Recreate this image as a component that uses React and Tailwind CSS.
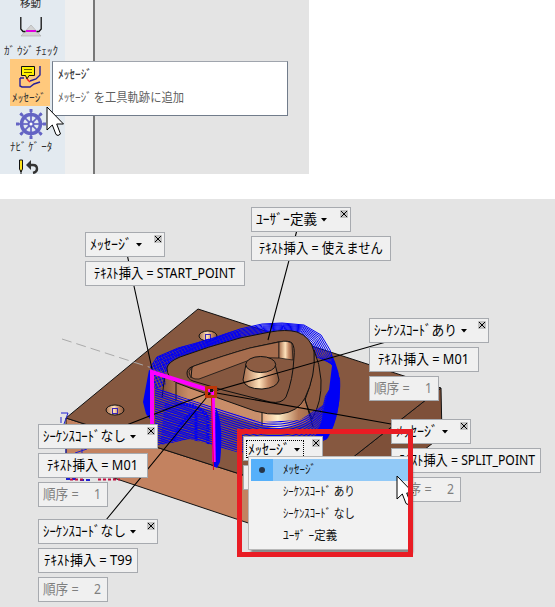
import { useLayoutEffect, useRef, useState } from "react";

// Single line of text squeezed or stretched horizontally to a given width.
function Fit({ w, children, className = "" }) {
  const ref = useRef(null);
  const [scale, setScale] = useState(1);
  useLayoutEffect(() => {
    if (ref.current) setScale(w / ref.current.offsetWidth);
  }, [w]);
  return (
    <span className={`block shrink-0 whitespace-nowrap ${className}`} style={{ width: w }}>
      <span ref={ref} className="inline-block origin-left" style={{ transform: `scaleX(${scale})` }}>
        {children}
      </span>
    </span>
  );
}

const Close = () => (
  <svg className="mt-[2px] mr-[2px] ml-auto shrink-0 self-start" width="8" height="8" viewBox="0 0 8 8" shapeRendering="crispEdges">
    <rect width="8" height="8" fill="#c3c3c3" />
    <path d="M1 1L7 7M7 1L1 7" stroke="#000" strokeWidth="1.1" />
  </svg>
);

function Tag({ place, title, tw, width, text, textW, textPad, boxW, order, focus }) {
  const box = "flex h-[25px] items-center border border-[#a7aaaf] bg-[#f0f0f0] pb-[2px]";
  return (
    <div className={`absolute flex flex-col gap-1 text-[14px] leading-[21px] text-black ${place}`}>
      <div className={`${box} pl-1`} style={{ width }}>
        <span className={focus ? "-ml-[2px] mt-[2px] flex h-[18px] items-center border border-dotted border-black pr-[3px] pl-px" : "flex items-center"}>
          <Fit w={tw}>{title}</Fit>
          <svg className="mt-[2px] ml-[4px]" width="6" height="4" viewBox="0 0 6 4">
            <path d="M0 0H6L3 3.5Z" fill="#000" />
          </svg>
        </span>
        <Close />
      </div>
      {text && (
        <div className={box} style={{ width: boxW, paddingLeft: textPad }}>
          <Fit w={textW}>{text}</Fit>
        </div>
      )}
      {order && (
        <div className={`${box} w-[70px] justify-between pr-[6px] pl-1 text-[#7f7f7f]`}>
          <Fit w={36}>順序 =</Fit>
          <Fit w={7}>{order}</Fit>
        </div>
      )}
    </div>
  );
}

const Cursor = ({ className }) => (
  <svg className={`absolute ${className}`} width="19" height="31" viewBox="0 0 19 31">
    <path d="M1 1V24L6.3 19L10 28.5L12 29.5L14.5 28L10.7 18H17.5Z" fill="#fff" stroke="#000" strokeWidth="1" />
  </svg>
);

const spokes = [0, 45, 90, 135, 180, 225, 270, 315];

function TopPanel() {
  return (
    <div className="relative flex h-[174px] w-[309px] overflow-hidden bg-[#e4e4e4]">
      <div className="flex w-[65px] flex-col bg-[#e3eaf0] text-[11px] leading-[14px] text-[#303030] [&>*]:shrink-0">
        <div className="-mt-[4px] h-[14px] pl-5"><Fit w={21}>移動</Fit></div>
        <svg className="mt-[6px] ml-5" width="22" height="22" viewBox="20 16 22 22">
          <path d="M21 36L31 25L41 36Z" fill="#d3d3d3" stroke="#aaa" strokeWidth=".6" />
          <path d="M20.8 17V29L23 31.5H25.500M41.2 17V29L39 31.5H36.5" fill="none" stroke="#111" strokeWidth="1.3" />
          <path d="M26 31H36" stroke="#e000e0" strokeWidth="2" />
        </svg>
        <div className="mt-[6px] h-[14px] pl-1"><Fit w={54}>ｶﾞ&#8198;ｳｼﾞ&#8198;ﾁｪｯｸ</Fit></div>
        <div className="mt-px ml-[10px] flex h-[47px] w-10 flex-col bg-[#ffc97d]">
          <svg className="mt-[4px] ml-[9px] shrink-0" width="24" height="28" viewBox="19 63 24 28">
            <path d="M40 66V75L36 79L30 81M20 78V86L22 87H30L34 84L40 82M20 78H24" fill="none" stroke="#26209c" strokeWidth="1.4" />
            <path d="M21.5 66.5H34.5V75.5H29L27 79L25.5 75.5H21.5Z" fill="#fff200" stroke="#111" />
            <path d="M24 69.5H32M24 72.5H32" stroke="#665f00" />
            <path d="M27 79L30 82" stroke="#e22" strokeWidth="1.5" />
          </svg>
          <div className="pl-[2px]"><Fit w={34}>ﾒｯｾｰｼﾞ</Fit></div>
        </div>
        <svg className="mt-[2px] ml-[15px]" width="32" height="32" viewBox="-16 -16 32 32">
          <g fill="none" stroke="#6464c4">
            <circle r="9.5" strokeWidth="3.5" />
            <circle r="2.5" strokeWidth="2" fill="#fff" />
            {spokes.map((a) => (
              <g key={a} transform={`rotate(${a})`}>
                <path d="M0-3V-15" strokeWidth="1.7" />
                <path d="M0-12V-15" strokeWidth="3" />
              </g>
            ))}
          </g>
        </svg>
        <div className="h-[14px] pl-[10px]"><Fit w={42}>ﾅﾋﾞ&#8198;ｹﾞ&#8198;ｰﾀ</Fit></div>
        <svg className="mt-[4px] ml-[18px] shrink-0" width="22" height="20" viewBox="18 158 22 20">
          <path d="M19.5 160V169L21 172L22.5 169V160Z" fill="#ffe51a" stroke="#111" />
          <path d="M21 170V178" stroke="#111" />
          <path d="M28 165H33Q37 165 37 169Q37 172 33 173" fill="none" stroke="#333" strokeWidth="2.4" />
          <path d="M26 165L31 160V170Z" fill="#333" />
        </svg>
      </div>
      <div className="w-7 bg-[#efefef]" />
      <div className="w-[2px] bg-[#777]" />
      <div className="absolute top-[61px] left-[52px] flex h-[55px] w-[236px] flex-col border border-[#717c8b] border-t-[#a0a5ad] bg-white pl-[5px] text-[12px] leading-4">
        <div className="mt-[5px] font-medium text-[#404040]"><Fit w={34}>ﾒｯｾｰｼﾞ</Fit></div>
        <div className="mt-[7px] text-[#606060]"><Fit w={126}>ﾒｯｾｰｼﾞ&#8198;を工具軌跡に追加</Fit></div>
      </div>
      <Cursor className="top-[106px] left-[46px]" />
    </div>
  );
}

const BOSS = "M167 368Q168 362 180 357Q207 347 240 338L270 332Q286 329 297 332Q311 337 314 352Q316 375 305 398Q298 412 280 414Q268 415 255 411L190 388L177 383Q167 378 167 368Z";
const POCKET = "M187 373Q187 368 194 366Q225 355 250 348L278 342Q289 340 292 343Q295 347 294 357Q293 380 286 397Q282 404 270 402L223 390L193 381Q187 379 187 373Z";

// Outermost and innermost tool passes; the ones between are interpolated.
const OUTER = [[150, 368], [157, 357], [178, 348], [208, 340], [240, 329], [262, 324], [282, 323], [304, 325], [321, 335], [330, 350], [338, 374]];
const INNER = [[165, 372], [168, 365], [184, 357], [212, 348], [242, 339], [264, 333], [284, 330], [300, 333], [312, 344], [317, 357], [333, 364]];
const STEPS = 9;
const rings = Array.from({ length: STEPS }, (_, i) => {
  const t = i / (STEPS - 1);
  return OUTER.map(([x, y], j) => `${(x + (INNER[j][0] - x) * t).toFixed(1)},${(y + (INNER[j][1] - y) * t).toFixed(1)}`).join(" ");
});
const passes = Array.from({ length: 27 }, (_, i) => i);

function Model() {
  return (
    <svg className="absolute inset-0" width="555" height="408" viewBox="0 199 555 408">
      <defs>
        <linearGradient id="wall" gradientUnits="userSpaceOnUse" x1="165" y1="0" x2="322" y2="0">
          <stop offset="0" stopColor="#8b5a3e" />
          <stop offset=".15" stopColor="#c88c66" />
          <stop offset=".6" stopColor="#c98f6c" />
          <stop offset=".64" stopColor="#ecba92" />
          <stop offset=".72" stopColor="#fff0c8" />
          <stop offset=".85" stopColor="#b67a57" />
          <stop offset="1" stopColor="#8b5a3e" />
        </linearGradient>
        <linearGradient id="cyl">
          <stop offset="0" stopColor="#a96f4d" />
          <stop offset=".45" stopColor="#ffe2bb" />
          <stop offset=".7" stopColor="#c48a66" />
          <stop offset="1" stopColor="#85553a" />
        </linearGradient>
        <pattern id="mesh" width="3" height="3" patternUnits="userSpaceOnUse" patternTransform="rotate(14)">
          <rect width="3" height="2" fill="#0000f5" />
        </pattern>
        <pattern id="dots" width="3" height="3" patternUnits="userSpaceOnUse" patternTransform="rotate(-24)">
          <rect width="2" height="2.2" fill="#0000f5" />
        </pattern>
        <clipPath id="lower">
          <path d="M155 386L182 397L223 410L262 422L300 420L323 405L332 365L340 378Q342 410 328 438L300 456L240 453L222 448L190 439L155 446Z" />
        </clipPath>
      </defs>

      {/* base plate */}
      <path d="M66 418L305 495V542L66 462Z" fill="#c38260" stroke="#111" />
      <path d="M305 495L441 388L442 436L305 542Z" fill="#7e5039" stroke="#111" />
      <path d="M66 418L198 309L441 388L305 495Z" fill="#865840" stroke="#111" />
      {[[208, 336], [115, 410]].map(([x, y]) => (
        <g key={x}>
          <ellipse cx={x} cy={y} rx="9" ry="5" fill="url(#cyl)" stroke="#111" />
          <rect x={x - 2.5} y={y - 1.5} width="5" height="5" fill="none" stroke="#3a24b8" />
        </g>
      ))}
      <path d="M62 339L152 368" stroke="#aaa" strokeDasharray="10 5" />

      {/* tool path around the back of the boss */}
      <path d="M150 368L157 357L178 348L240 329L242 339L184 357L168 365L166 386L158 388L152 388Z" fill="url(#dots)" />
      <g fill="none" stroke="#0000f5" strokeWidth="1" strokeLinejoin="round">
        {rings.map((points) => <polyline key={points} points={points} />)}
      </g>
      <path d="M331 353Q341 372 340 390Q339 422 326 440L316 436L322 420Q325 400 329 390L332 366Z" fill="#0000f5" />
      <path d="M149 370L143 402L146 414L154 424V372Z" fill="#0000f5" />

      {/* boss */}
      <path d="M167 370L164 396L262 426Q290 432 311 420Q324 400 320 372L314 350Z" fill="url(#wall)" />
      <path d="M314 350Q320 364 321 380Q322 402 312 419L305 400Q315 375 314 350Z" fill="#8c5b40" stroke="#111" />
      <path d="M165 374L162 398M176 383V401M262 412V426M305 399L313 427" stroke="#111" fill="none" />
      <path d={BOSS} fill="#865840" stroke="#111" />
      <path d={POCKET} fill="#865840" stroke="#111" />
      <path d="M189 372Q190 368 194 366Q225 355 250 348L279 342V358Q260 357 247 361L199 379Q190 380 189 372Z" fill="#a66d4e" stroke="#111" strokeWidth=".8" />
      <path d="M279 342Q289 340 292 344L293 360L279 358Z" fill="url(#cyl)" stroke="#111" strokeWidth=".7" />
      <path d="M192 367L191 378" stroke="#111" />
      <path d="M246 364L243 380Q245 389 262 389Q277 388 279 380L275 364Z" fill="url(#cyl)" stroke="#111" />
      <ellipse cx="260.7" cy="364.5" rx="15" ry="8" fill="#8c5c42" stroke="#111" />

      {/* lower passes */}
      <g clipPath="url(#lower)" fill="none" stroke="#0000f5" strokeWidth="1.1">
        {passes.map((i) => {
          const y = i * 2.3;
          return <path key={i} d={`M143 ${382 + y}L182 ${395 + y}L224 ${409 + y}L262 ${421 + y}Q298 ${426 + y} 322 ${402 + y}L342 ${370 + y}`} />;
        })}
        <path d="M180 404Q200 404 208 418V450M172 450Q176 420 196 412V450" strokeWidth="3" strokeDasharray="2 1" />
      </g>
      <path d="M165 402Q190 402 207 412L207 442L190 439L160 445Z" fill="url(#mesh)" opacity=".6" />
      <path d="M216 408Q224 424 220 462L217 468L213 466Z" fill="#0000f5" />

      {/* clamp marks at the left corner */}
      <g fill="none" stroke="#2020d0">
        <path d="M61 413H68L64 424M66 447V454M75 453L87 449M82 449V456M61 417V423" />
        <path d="M66 479H76M80 480H92" strokeDasharray="4 2" strokeWidth="2" />
        <path d="M70 479.5H84M98 479.5H120" stroke="#c01040" strokeDasharray="3 2" strokeWidth="2" />
      </g>

      <path d="M127 254L152 369M297 230L268 340M211 392L386 342M211 392L391 424M211 392L124 426M211 392L106 520" stroke="#000" strokeWidth="1.1" />
      <path d="M152 430V372L212 391" fill="none" stroke="#ff00ff" strokeWidth="4" />
      <path d="M213 391L214 462" stroke="#ff00ff" strokeWidth="3.5" />
      <path d="M211.5 398L213.5 470" stroke="#e00020" strokeWidth="1" />
      <rect x="206.5" y="387.5" width="9" height="9" fill="none" stroke="#bd3608" strokeWidth="3" />
      <rect x="210" y="389" width="3" height="3" fill="#111" />
    </svg>
  );
}

const items = [
  { label: "ﾒｯｾｰｼﾞ", w: 33 },
  { label: "ｼｰｹﾝｽｺｰﾄﾞ\u2005あり", w: 72 },
  { label: "ｼｰｹﾝｽｺｰﾄﾞ\u2005なし", w: 72 },
  { label: "ﾕｰｻﾞ\u2005ｰ定義", w: 54 },
];

function Menu() {
  return (
    <div className="absolute top-[257px] left-[248px] flex h-[94px] w-[162px] flex-col border border-[#b8b8b8] bg-[#f2f2f2] pt-[2px] pl-[2px] text-[12px] leading-[22px] text-[#111] shadow-[3px_3px_2px_#888]">
      {items.map(({ label, w }, i) => (
        <div key={label} className={`flex h-[22px] shrink-0 items-center ${i === 0 ? "bg-[#91c9f7]" : ""}`}>
          <span className={`flex h-full w-[22px] items-center justify-center ${i === 0 ? "bg-[#56b0fa]" : ""}`}>
            {i === 0 && <span className="size-[6px] rounded-full bg-[#26364a]" />}
          </span>
          <span className="ml-[10px]"><Fit w={w}>{label}</Fit></span>
        </div>
      ))}
    </div>
  );
}

export default function App() {
  return (
    <div className="flex h-[607px] w-[555px] flex-col gap-[25px] overflow-hidden bg-white font-['Noto_Sans','Noto_Sans_CJK_JP',sans-serif]">
      <TopPanel />
      <div className="relative h-[408px] w-[555px] overflow-hidden bg-[#e4e4e4]">
        <Model />
        <Tag place="left-[85px] top-[33px]" title="ﾒｯｾｰｼﾞ" tw={42} width={80} text="ﾃｷｽﾄ挿入 = START_POINT" textW={141} textPad={8} boxW={160} />
        <Tag place="left-[251px] top-[8px]" title="ﾕｰｻﾞｰ定義" tw={61} width={100} text="ﾃｷｽﾄ挿入 = 使えません" textW={124} textPad={7} boxW={140} />
        <Tag place="left-[369px] top-[119px]" title="ｼｰｹﾝｽｺｰﾄﾞあり" tw={83} width={120} text="ﾃｷｽﾄ挿入 = M01" textW={91} textPad={8} boxW={110} order="1" />
        <Tag place="left-[38px] top-[225px]" title="ｼｰｹﾝｽｺｰﾄﾞなし" tw={83} width={120} text="ﾃｷｽﾄ挿入 = M01" textW={91} textPad={8} boxW={110} order="1" />
        <Tag place="left-[38px] top-[320px]" title="ｼｰｹﾝｽｺｰﾄﾞなし" tw={83} width={120} text="ﾃｷｽﾄ挿入 = T99" textW={88} textPad={5} boxW={100} order="2" />
        <Tag place="left-[391px] top-[220px]" title="ﾒｯｾｰｼﾞ" tw={42} width={80} text="ﾃｷｽﾄ挿入 = SPLIT_POINT" textW={136} textPad={7} boxW={150} order="2" />
        <Tag place="left-[243px] top-[237px]" title="ﾒｯｾｰｼﾞ" tw={42} width={80} text=" " textW={1} textPad={0} boxW={150} focus />
        <Menu />
        <Cursor className="top-[276px] left-[396px]" />
        <div className="absolute top-[230px] left-[237px] h-[128px] w-[176px] border-[5px] border-[#e91c24]" />
      </div>
    </div>
  );
}
